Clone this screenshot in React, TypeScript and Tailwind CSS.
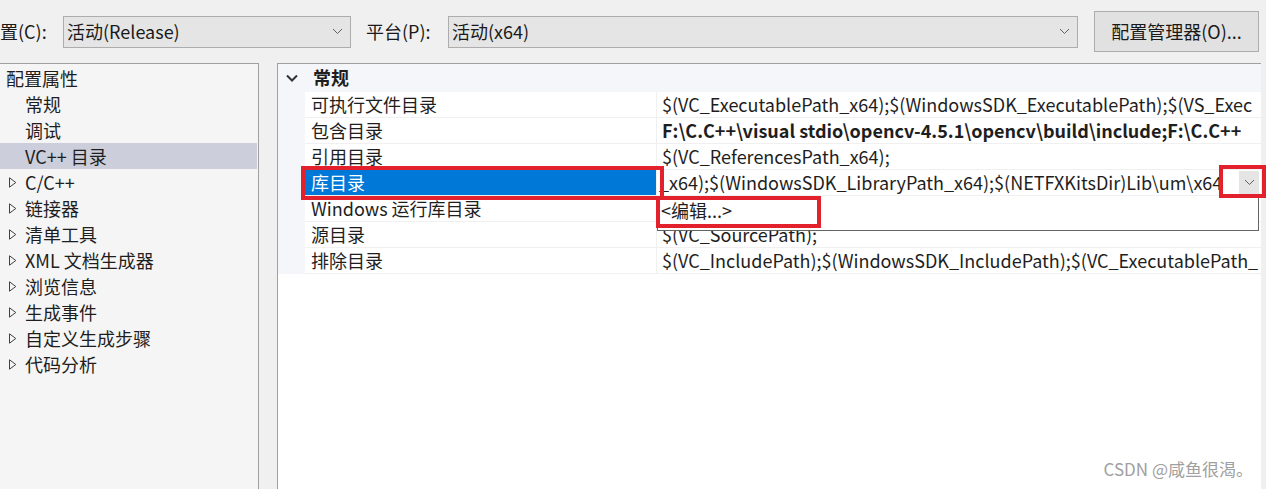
import React from 'react';

const font = { fontFamily: '"Noto Sans CJK SC", "Noto Sans", sans-serif' };

type Row = { name: string; value: string; bold?: boolean };

const rows: Row[] = [
  { name: '可执行文件目录', value: '$(VC_ExecutablePath_x64);$(WindowsSDK_ExecutablePath);$(VS_Exec' },
  { name: '包含目录', value: 'F:\\C.C++\\visual stdio\\opencv-4.5.1\\opencv\\build\\include;F:\\C.C++', bold: true },
  { name: '引用目录', value: '$(VC_ReferencesPath_x64);' },
  { name: '库目录', value: '' },
  { name: 'Windows 运行库目录', value: '' },
  { name: '源目录', value: '$(VC_SourcePath);' },
  { name: '排除目录', value: '$(VC_IncludePath);$(WindowsSDK_IncludePath);$(VC_ExecutablePath_' },
];

const tree = [
  { label: '配置属性', indent: 'pl-[6px]' },
  { label: '常规', indent: 'pl-[25px]' },
  { label: '调试', indent: 'pl-[25px]' },
  { label: 'VC++ 目录', indent: 'pl-[25px]', selected: true },
  { label: 'C/C++', expander: true },
  { label: '链接器', expander: true },
  { label: '清单工具', expander: true },
  { label: 'XML 文档生成器', expander: true },
  { label: '浏览信息', expander: true },
  { label: '生成事件', expander: true },
  { label: '自定义生成步骤', expander: true },
  { label: '代码分析', expander: true },
];

function Chevron({ className = '' }: { className?: string }) {
  return (
    <svg width="11" height="7" viewBox="0 0 11 7" className={className}>
      <path d="M1 1 L5.5 5.5 L10 1" fill="none" stroke="#606060" strokeWidth="1" />
    </svg>
  );
}

function Combo({ text, width }: { text: string; width: string }) {
  return (
    <div className={`${width} h-[32px] flex items-center justify-between border border-[#adadad] bg-[#e5e5e5] pl-[3px] pr-[7px] shrink-0`}>
      <span className="text-[18px] text-[#1a1a1a]">{text}</span>
      <Chevron />
    </div>
  );
}

export default function App() {
  return (
    <div className="w-[1266px] h-[489px] bg-[#f0f0f0] overflow-hidden relative text-[18px]" style={font}>
      {/* toolbar */}
      <div className="h-[63px] flex items-center">
        <span className="text-[#1a1a1a] w-[63px] shrink-0">置(C):</span>
        <Combo text="活动(Release)" width="w-[288px]" />
        <span className="text-[#1a1a1a] ml-[15px] w-[82px] shrink-0">平台(P):</span>
        <Combo text="活动(x64)" width="w-[630px]" />
        <div className="ml-[16px] w-[165px] h-[41px] shrink-0 border border-[#adadad] bg-[#e1e1e1] flex items-center justify-center text-[#1a1a1a]">
          配置管理器(O)...
        </div>
      </div>

      <div className="flex h-[426px]">
        {/* left tree */}
        <div className="w-[259px] shrink-0 border-t border-r border-[#a0a0a0] bg-[#f5f5f5] pt-[1px]">
          {tree.map((t) => (
            <div
              key={t.label}
              className={`h-[26px] flex items-center text-[#1e1e1e] ${t.selected ? 'bg-[#cccedb] mr-[1px]' : ''} ${t.expander ? 'pl-[9px]' : t.indent}`}
            >
              {t.expander && (
                <svg width="8" height="11" viewBox="0 0 8 11" className="mr-[8px]">
                  <path d="M0.5 0.8 L6.8 5.5 L0.5 10.2 Z" fill="none" stroke="#404040" strokeWidth="1" />
                </svg>
              )}
              {t.label}
            </div>
          ))}
        </div>

        {/* property grid */}
        <div className="ml-[18px] w-[984px] shrink-0 border-t border-l border-[#a0a0a0] bg-white overflow-hidden">
          <div className="h-[28px] flex items-center bg-[#f5f6fa]">
            <div className="w-[27px] shrink-0 flex justify-center">
              <svg width="12" height="8" viewBox="0 0 12 8">
                <path d="M1 1.5 L6 6.5 L11 1.5" fill="none" stroke="#333" strokeWidth="2" />
              </svg>
            </div>
            <span className="font-bold text-[#1e1e1e] ml-[8px] -mt-[1px]">常规</span>
          </div>
          <div className="flex">
            <div className="w-[27px] shrink-0 bg-[#f5f6fa]" />
            <div className="flex-1 min-w-0">
              {rows.map((r, i) => (
                <div key={r.name} className="h-[26px] flex border-b border-[#f0f0f0]">
                  <div
                    className={`w-[352px] shrink-0 border-r border-[#f0f0f0] flex items-center pl-[6px] ${i === 3 ? 'bg-[#0078d7] text-white' : 'text-[#1e1e1e]'}`}
                  >
                    {r.name}
                  </div>
                  <div className="flex-1 min-w-0 flex items-center overflow-hidden">
                    {i === 3 ? (
                      <div className="flex items-center w-full h-full">
                        <span className="flex-1 min-w-0 overflow-hidden whitespace-nowrap text-[#1e1e1e] pl-[2px]">
                          _x64);$(WindowsSDK_LibraryPath_x64);$(NETFXKitsDir)Lib\um\x64
                        </span>
                        <div className="w-[20px] h-[24px] shrink-0 bg-[#e5e5e5] flex items-center justify-center mr-[2px]">
                          <Chevron />
                        </div>
                      </div>
                    ) : (
                      <span className={`whitespace-nowrap text-[#1e1e1e] pl-[5px] ${r.bold ? 'font-bold' : ''}`}>
                        {r.value}
                      </span>
                    )}
                  </div>
                </div>
              ))}
            </div>
          </div>
        </div>
      </div>

      {/* dropdown popup */}
      <div className="absolute left-[657px] top-[196px] w-[602px] h-[35px] bg-white border border-[#646464] border-t-0 text-[#1e1e1e] pl-[3px] pt-[1px]">
        &lt;编辑...&gt;
      </div>

      {/* red annotation boxes */}
      <div className="absolute left-[301px] top-[166px] w-[363px] h-[34px] border-[4px] border-[#e3212c]" />
      <div className="absolute left-[656px] top-[196px] w-[165px] h-[32px] border-[4px] border-[#e3212c]" />
      <div className="absolute left-[1219px] top-[165px] w-[47px] h-[33px] border-[4px] border-[#e3212c]" />

      {/* watermark */}
      <div className="absolute right-[13px] bottom-[8px] text-[17px] text-[#a0a0a0]">CSDN @咸鱼很渴。</div>
    </div>
  );
}
